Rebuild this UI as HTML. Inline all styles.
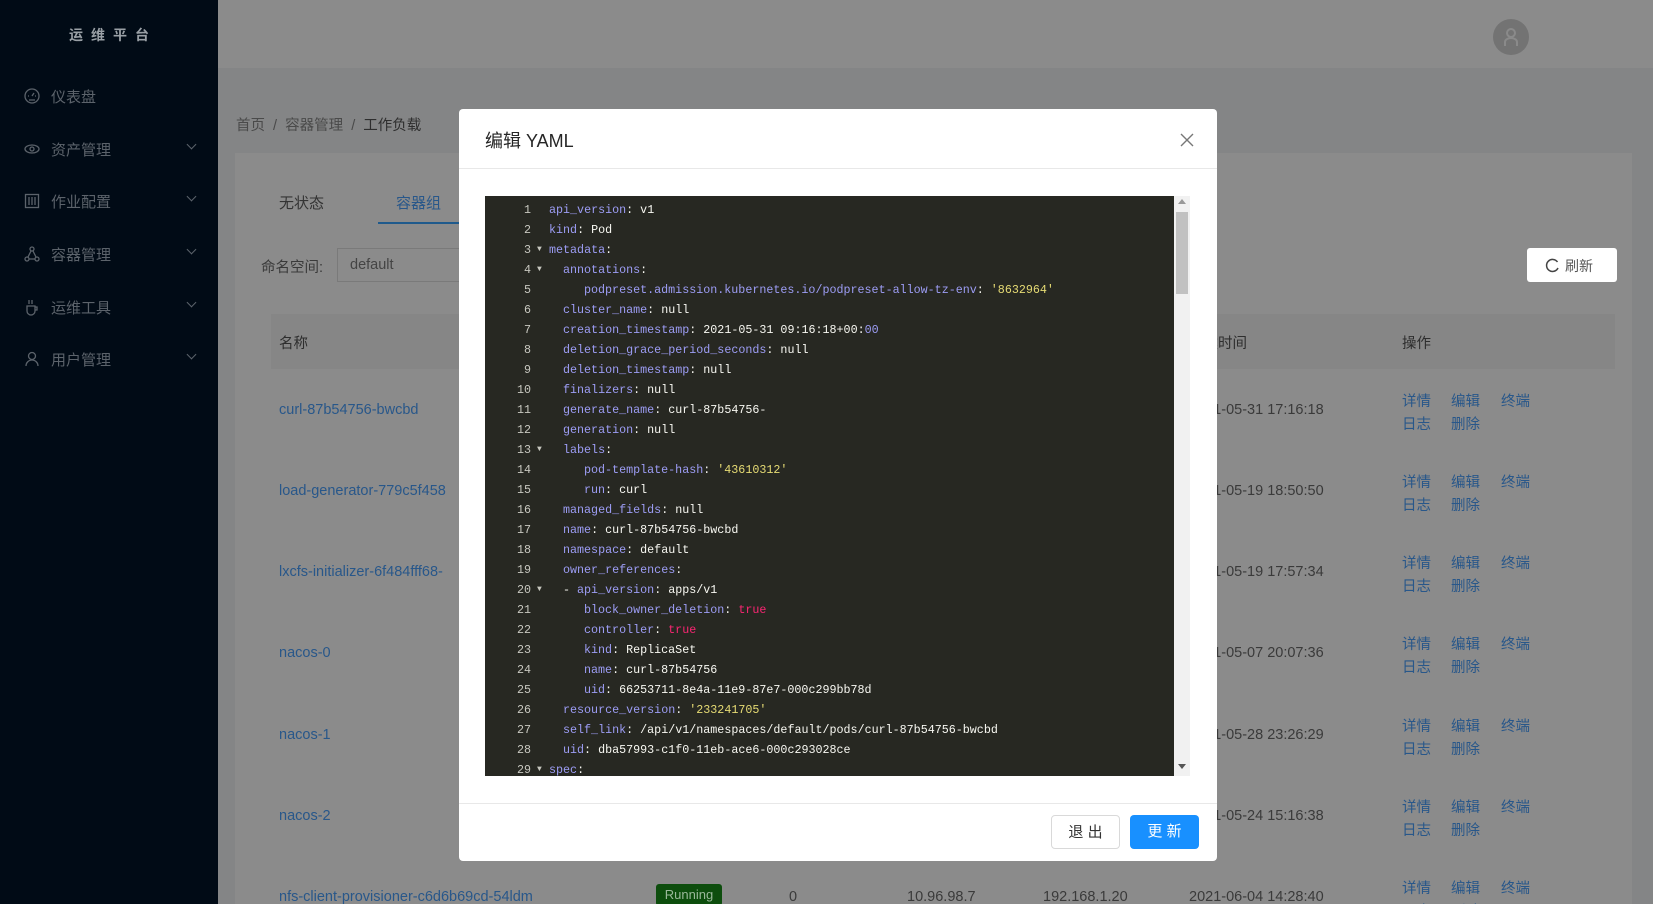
<!DOCTYPE html>
<html><head><meta charset="utf-8"><style>
*{margin:0;padding:0;box-sizing:border-box}
html{width:1653px;height:904px;overflow:hidden}
body{width:1653px;height:904px;overflow:hidden;position:relative;background:#848586;font-family:"Liberation Sans","Noto Sans CJK SC",sans-serif;font-size:14.5px;color:#3a3a3a}
.a{position:absolute;white-space:nowrap}
#side{left:0;top:0;width:218px;height:904px;background:#010b16}
.mi{position:absolute;left:0;width:218px;color:#5c636b;font-size:15px}
.mi svg{position:absolute;left:24px;top:-9px}
.mi span{position:absolute;left:51px;top:-10px}
.mi i{position:absolute;left:188px;top:-8px;width:7px;height:7px;border-right:1.5px solid #5c636b;border-bottom:1.5px solid #5c636b;transform:rotate(45deg)}
.lk{color:#28578a}
#modal{left:459px;top:109px;width:758px;height:752px;background:#fff;border-radius:4px}
#code{left:485px;top:196px;width:689px;height:580px;background:#272822;overflow:hidden;font-family:"Liberation Mono",monospace;font-size:11.7px}
.ln{position:absolute;left:0;width:46px;text-align:right;color:#c8c8c0}
.fd{position:absolute;left:52px;color:#c8c8c0;font-size:8px}
.tx{position:absolute;left:64px;color:#f8f8f2;white-space:pre}
.k{color:#9d9df5}.s{color:#e6db74}.t{color:#f92672}
.btn{position:absolute;border-radius:4px;font-size:15px;text-align:center;line-height:33px;height:34px}
.op{position:absolute;color:#28578a;font-size:14.5px;line-height:23px;white-space:nowrap}
</style></head><body>
<div id="side" class="a">
<div class="a" style="left:0;width:218px;top:25px;text-align:center;color:#9aa0a6;font-size:14px;font-weight:bold;letter-spacing:8px;padding-left:8px">运维平台</div>
<div class="mi" style="top:96px"><svg width="16" height="18" viewBox="0 0 16 18" fill="none" stroke="#5c636b" stroke-width="1.3"><circle cx="8" cy="9" r="7"/><path d="M8 9l2-3M4 9h1M11 9h1M5 13h6"/></svg><span>仪表盘</span></div>
<div class="mi" style="top:149px"><svg width="16" height="18" viewBox="0 0 16 18" fill="none" stroke="#5c636b" stroke-width="1.3"><ellipse cx="8" cy="9" rx="7" ry="4"/><circle cx="8" cy="9" r="2"/></svg><span>资产管理</span><i></i></div>
<div class="mi" style="top:201px"><svg width="16" height="18" viewBox="0 0 16 18" fill="none" stroke="#5c636b" stroke-width="1.3"><rect x="1.5" y="2.5" width="13" height="13"/><path d="M5 5v8M8 5v8M11 5v8"/></svg><span>作业配置</span><i></i></div>
<div class="mi" style="top:254px"><svg width="16" height="18" viewBox="0 0 16 18" fill="none" stroke="#5c636b" stroke-width="1.3"><circle cx="8" cy="4" r="2"/><circle cx="3" cy="14" r="2"/><circle cx="13" cy="14" r="2"/><path d="M7 6l-3 6M9 6l3 6M5 14h6"/></svg><span>容器管理</span><i></i></div>
<div class="mi" style="top:307px"><svg width="16" height="18" viewBox="0 0 16 18" fill="none" stroke="#5c636b" stroke-width="1.3"><path d="M3 8h8v5a4 4 0 0 1-8 0zM11 9h2v3h-2M5 2v4M8 2v4"/></svg><span>运维工具</span><i></i></div>
<div class="mi" style="top:359px"><svg width="16" height="18" viewBox="0 0 16 18" fill="none" stroke="#5c636b" stroke-width="1.3"><circle cx="8" cy="6" r="3.5"/><path d="M2 16a6 6 0 0 1 12 0"/></svg><span>用户管理</span><i></i></div>
</div>
<div class="a" style="left:218px;top:0;width:1435px;height:68px;background:#8b8b8b"></div>
<div class="a" style="left:1493px;top:19px;width:36px;height:36px;border-radius:50%;background:#737373"></div>
<svg class="a" style="left:1502px;top:27px" width="18" height="20" viewBox="0 0 18 20" fill="none" stroke="#8a8a8a" stroke-width="2"><circle cx="9" cy="6" r="4"/><path d="M3 19v-4a6 4 0 0 1 12 0v4"/></svg>
<div class="a" style="left:236px;top:114px;color:#4a4a4a;font-size:14.5px">首页 &nbsp;/&nbsp; 容器管理 &nbsp;/&nbsp; <span style="color:#2e2e2e">工作负载</span></div>
<div class="a" style="left:235px;top:153px;width:1397px;height:760px;background:#8b8b8b"></div>
<div class="a" style="left:279px;top:192px;color:#333;font-size:15px">无状态</div>
<div class="a lk" style="left:396px;top:192px;font-size:15px">容器组</div>
<div class="a" style="left:378px;top:222px;width:82px;height:2px;background:#1f5a8c"></div>
<div class="a" style="left:261px;top:256px;color:#3a3a3a">命名空间:</div>
<div class="a" style="left:337px;top:248px;width:130px;height:34px;border:1px solid #7a7a7a;background:#8b8b8b;color:#444;padding:8px 12px">default</div>
<div class="a" style="left:1527px;top:248px;width:90px;height:34px;background:#fff;border-radius:3px;color:#555;padding:8px 0 0 38px;font-size:14px">刷新</div>
<svg class="a" style="left:1545px;top:258px" width="15" height="15" viewBox="0 0 15 15" fill="none" stroke="#444" stroke-width="1.5"><path d="M12.5 4A6 6 0 1 0 13 10"/></svg>
<div class="a" style="left:271px;top:314px;width:1344px;height:55px;background:#868686"></div>
<div class="a" style="left:279px;top:332px;color:#2e2e2e">名称</div>
<div class="a" style="left:1189px;top:332px;color:#2e2e2e">创建时间</div>
<div class="a" style="left:1402px;top:332px;color:#2e2e2e">操作</div>
<div class="a lk" style="left:279px;top:402px">curl-87b54756-bwcbd</div>
<div class="a lk" style="left:279px;top:483px">load-generator-779c5f458</div>
<div class="a lk" style="left:279px;top:564px">lxcfs-initializer-6f484fff68-</div>
<div class="a lk" style="left:279px;top:645px">nacos-0</div>
<div class="a lk" style="left:279px;top:727px">nacos-1</div>
<div class="a lk" style="left:279px;top:808px">nacos-2</div>
<div class="a lk" style="left:279px;top:889px">nfs-client-provisioner-c6d6b69cd-54ldm</div>
<div class="a" style="left:656px;top:884px;width:66px;height:22px;background:#0d4d0d;color:#9ab89a;border-radius:3px;text-align:center;font-size:13px;line-height:22px">Running</div>
<div class="a" style="left:789px;top:889px">0</div>
<div class="a" style="left:907px;top:889px">10.96.98.7</div>
<div class="a" style="left:1043px;top:889px">192.168.1.20</div>
<div class="a" style="left:1189px;top:889px">2021-06-04 14:28:40</div>
<div class="a" style="left:1189px;top:402px">2021-05-31 17:16:18</div>
<div class="a" style="left:1189px;top:483px">2021-05-19 18:50:50</div>
<div class="a" style="left:1189px;top:564px">2021-05-19 17:57:34</div>
<div class="a" style="left:1189px;top:645px">2021-05-07 20:07:36</div>
<div class="a" style="left:1189px;top:727px">2021-05-28 23:26:29</div>
<div class="a" style="left:1189px;top:808px">2021-05-24 15:16:38</div>
<div id="ops"></div>

<div id="modal" class="a">
<div class="a" style="left:26px;top:18px;font-size:18px;color:#262626">编辑 YAML</div>
<svg class="a" style="left:721px;top:24px" width="14" height="14" viewBox="0 0 14 14" stroke="#777" stroke-width="1.4"><path d="M1 1l12 12M13 1L1 13"/></svg>
<div class="a" style="left:0;top:59px;width:758px;height:1px;background:#e8e8e8"></div>
<div class="a" style="left:0;top:694px;width:758px;height:1px;background:#e8e8e8"></div>
<div class="btn" style="left:592px;top:706px;width:69px;border:1px solid #d9d9d9;color:#333">退 出</div>
<div class="btn" style="left:671px;top:706px;width:69px;background:#1890ff;color:#fff">更 新</div>
<div class="a" style="left:715px;top:87px;width:16px;height:580px;background:#f1f1f1"></div>
<div class="a" style="left:717px;top:103px;width:12px;height:82px;background:#c1c1c1"></div>
<div class="a" style="left:719px;top:90px;width:0;height:0;border-left:4px solid transparent;border-right:4px solid transparent;border-bottom:5px solid #999"></div>
<div class="a" style="left:719px;top:655px;width:0;height:0;border-left:4px solid transparent;border-right:4px solid transparent;border-top:5px solid #555"></div>
</div>

<div id="code" class="a"></div>
<script>
var o='';[391,472,553,634,716,797,878].forEach(function(y){o+='<div class=op style="left:1402px;top:'+y+'px">详情<br>日志</div><div class=op style="left:1451px;top:'+y+'px">编辑<br>删除</div><div class=op style="left:1501px;top:'+y+'px">终端</div>';});
document.getElementById('ops').innerHTML=o;
var L=[
[0,'','<span class=k>api_version</span>: v1'],
[0,'','<span class=k>kind</span>: Pod'],
[0,'▼','<span class=k>metadata</span>:'],
[2,'▼','<span class=k>annotations</span>:'],
[5,'','<span class=k>podpreset.admission.kubernetes.io/podpreset-allow-tz-env</span>: <span class=s>\'8632964\'</span>'],
[2,'','<span class=k>cluster_name</span>: null'],
[2,'','<span class=k>creation_timestamp</span>: 2021-05-31 09:16:18+00:<span class=k>00</span>'],
[2,'','<span class=k>deletion_grace_period_seconds</span>: null'],
[2,'','<span class=k>deletion_timestamp</span>: null'],
[2,'','<span class=k>finalizers</span>: null'],
[2,'','<span class=k>generate_name</span>: curl-87b54756-'],
[2,'','<span class=k>generation</span>: null'],
[2,'▼','<span class=k>labels</span>:'],
[5,'','<span class=k>pod-template-hash</span>: <span class=s>\'43610312\'</span>'],
[5,'','<span class=k>run</span>: curl'],
[2,'','<span class=k>managed_fields</span>: null'],
[2,'','<span class=k>name</span>: curl-87b54756-bwcbd'],
[2,'','<span class=k>namespace</span>: default'],
[2,'','<span class=k>owner_references</span>:'],
[2,'▼','- <span class=k>api_version</span>: apps/v1'],
[5,'','<span class=k>block_owner_deletion</span>: <span class=t>true</span>'],
[5,'','<span class=k>controller</span>: <span class=t>true</span>'],
[5,'','<span class=k>kind</span>: ReplicaSet'],
[5,'','<span class=k>name</span>: curl-87b54756'],
[5,'','<span class=k>uid</span>: 66253711-8e4a-11e9-87e7-000c299bb78d'],
[2,'','<span class=k>resource_version</span>: <span class=s>\'233241705\'</span>'],
[2,'','<span class=k>self_link</span>: /api/v1/namespaces/default/pods/curl-87b54756-bwcbd'],
[2,'','<span class=k>uid</span>: dba57993-c1f0-11eb-ace6-000c293028ce'],
[0,'▼','<span class=k>spec</span>:']];
var h='';L.forEach(function(l,i){var t=4+i*20;h+='<div class=ln style="top:'+t+'px;line-height:20px">'+(i+1)+'</div>'+(l[1]?'<div class=fd style="top:'+t+'px;line-height:20px">'+l[1]+'</div>':'')+'<div class=tx style="top:'+t+'px;line-height:20px;left:'+(64+l[0]*7)+'px">'+l[2]+'</div>';});
document.getElementById('code').innerHTML=h;
</script>
</body></html>
